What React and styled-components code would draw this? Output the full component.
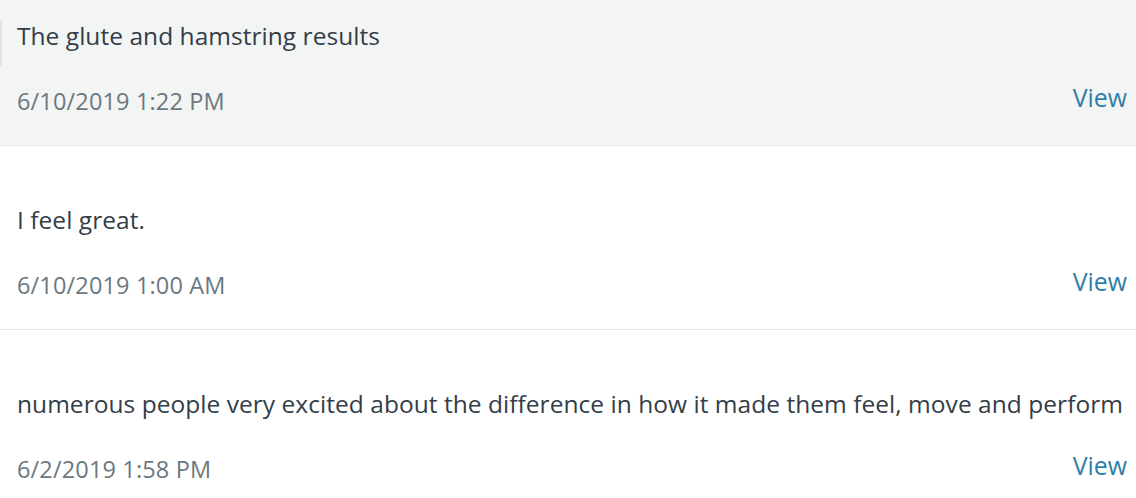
import React from "react";
import styled, { createGlobalStyle } from "styled-components";

const Global = createGlobalStyle`
  html, body { margin: 0; padding: 0; background: #fff; overflow: hidden; }
  body { font-family: "Open Sans", "Liberation Sans", sans-serif; }
`;

const List = styled.div`
  display: flex;
  flex-direction: column;
  margin-top: -38px;
`;

const Row = styled.div`
  position: relative;
  display: flex;
  flex-direction: column;
  height: 184px;
  box-sizing: border-box;
  padding: 58px 9px 0 17px;
  background: ${(p) => (p.$active ? "#f3f4f4" : "#fff")};
  border-bottom: 1px solid #e6e8e8;
  &::before {
    content: "";
    display: ${(p) => (p.$active ? "block" : "none")};
    position: absolute;
    left: 0;
    top: 58px;
    width: 2px;
    height: 46px;
    background: #e2e4e4;
  }
`;

const Body = styled.div`
  font-size: 24.5px;
  letter-spacing: 0.04px;
  line-height: 32px;
  color: #333e48;
  white-space: nowrap;
`;

const Footer = styled.div`
  display: flex;
  justify-content: space-between;
  align-items: flex-end;
  margin-top: 29px;
`;

const Stamp = styled.span`
  font-size: 23.5px;
  letter-spacing: 0.15px;
  line-height: 32px;
  color: #6b787f;
`;

const ViewLink = styled.a`
  font-size: 24.8px;
  line-height: 32px;
  color: #2f7da8;
  text-decoration: none;
  margin-bottom: 4px;
  cursor: pointer;
`;

const items = [
  { text: "The glute and hamstring results", date: "6/10/2019 1:22 PM", active: true },
  { text: "I feel great.", date: "6/10/2019 1:00 AM" },
  {
    text: "numerous people very excited about the difference in how it made them feel, move and perform",
    date: "6/2/2019 1:58 PM",
  },
];

export default function App() {
  return (
    <>
      <Global />
      <List>
        {items.map((it) => (
          <Row key={it.date} $active={it.active}>
            <Body>{it.text}</Body>
            <Footer>
              <Stamp>{it.date}</Stamp>
              <ViewLink>View</ViewLink>
            </Footer>
          </Row>
        ))}
      </List>
    </>
  );
}
